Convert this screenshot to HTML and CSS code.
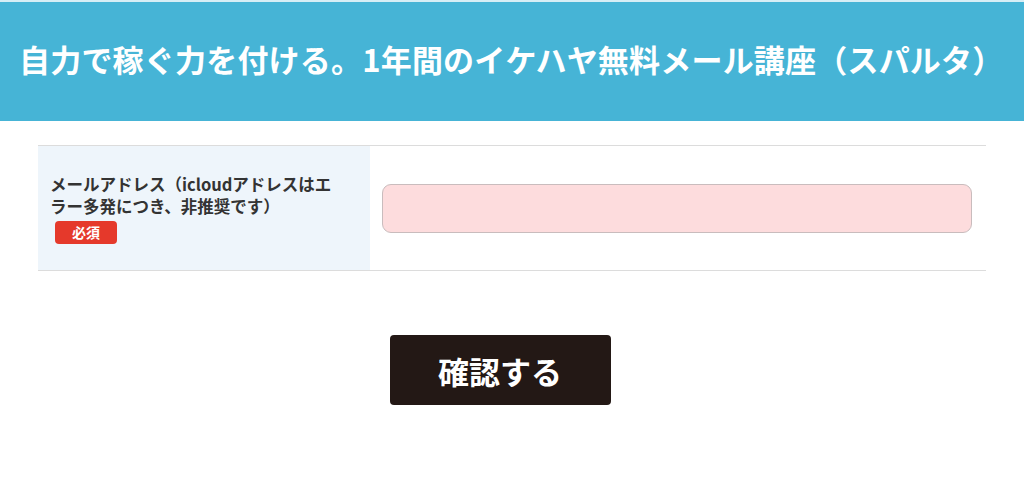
FILE: index.html
```html
<!DOCTYPE html>
<html lang="ja">
<head>
    <meta charset="UTF-8">
    <meta name="viewport" content="width=device-width, initial-scale=1.0">
    <title>イケハヤ無料メール講座</title>
    <link rel="stylesheet" href="styles.css">
</head>
<body>
    <header class="site-header">
        <h1>自力で稼ぐ力を付ける。1年間のイケハヤ無料メール講座（スパルタ）</h1>
    </header>

    <main class="form-wrap">
        <table class="form-table">
            <tr>
                <th>
                    <span class="label-text">メールアドレス（icloudアドレスはエラー多発につき、非推奨です）</span>
                    <span class="required">必須</span>
                </th>
                <td>
                    <input type="email" name="email" class="text-input">
                </td>
            </tr>
        </table>

        <div class="actions">
            <button type="submit" class="confirm-button">確認する</button>
        </div>
    </main>
</body>
</html>
```

FILE: styles.css
```css
body {
    font-family: "Noto Sans CJK JP", "Noto Sans", sans-serif;
    background-color: #fff;
    color: #333;
    margin: 0;
}

.site-header {
    box-sizing: border-box;
    background-color: #46b4d6;
    border-top: 2px solid #d6eef6;
    height: 121px;
    display: flex;
    align-items: center;
    padding: 0 20px 6px 19px;
}

.site-header h1 {
    margin: 0;
    color: #fff;
    font-size: 31px;
    font-weight: bold;
    letter-spacing: 0.2px;
    white-space: nowrap;
}

.form-wrap {
    padding: 24px 38px 0;
}

.form-table {
    width: 100%;
    border-collapse: collapse;
    border-top: 1px solid #dcdcdc;
    border-bottom: 1px solid #dcdcdc;
}

.form-table th {
    width: 296px;
    background-color: #eef5fb;
    text-align: left;
    font-size: 16.5px;
    font-weight: bold;
    line-height: 22px;
    padding: 27px 24px 26px 12px;
    vertical-align: middle;
}

.label-text {
    display: block;
}

.required {
    display: inline-block;
    margin: 4px 0 0 5px;
    height: 23px;
    background-color: #e5392b;
    color: #fff;
    font-size: 14px;
    line-height: 23px;
    padding: 0 17px;
    border-radius: 4px;
    vertical-align: top;
}

.form-table td {
    padding: 0 14px 0 12px;
    vertical-align: middle;
}

.text-input {
    display: block;
    box-sizing: border-box;
    width: 100%;
    height: 49px;
    background-color: #fddcdd;
    border: 1px solid #c9bcbd;
    border-radius: 9px;
}

.actions {
    display: flex;
    justify-content: center;
    padding: 64px 24px 0 0;
}

.confirm-button {
    width: 221px;
    height: 70px;
    background-color: #231815;
    color: #fff;
    border: none;
    border-radius: 4px;
    font-family: inherit;
    font-size: 31px;
    font-weight: bold;
    cursor: pointer;
}
```
